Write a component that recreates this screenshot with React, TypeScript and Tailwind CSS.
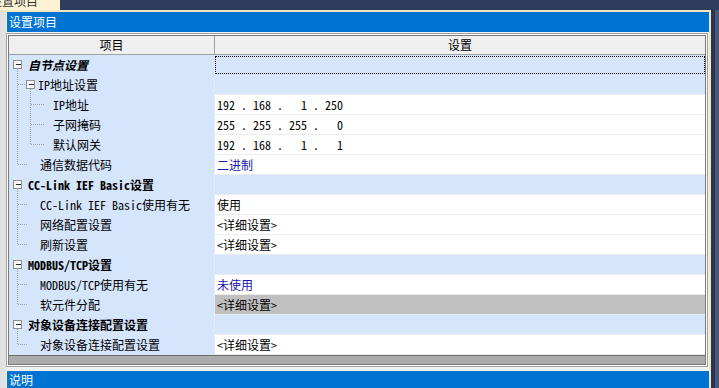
import type { ReactNode } from "react";

type Kind = "root" | "group" | "leaf" | "leafLast" | "sub" | "subLast";

type Row = {
  label: string;
  kind: Kind;
  value?: ReactNode;
  cell?: "blue" | "white" | "gray" | "focus";
  blueText?: boolean;
};

const guideWidth: Record<Kind, number> = {
  root: 19,
  group: 29,
  leaf: 31,
  leafLast: 31,
  sub: 44,
  subLast: 44,
};

function Box({ cx }: { cx: number }) {
  return (
    <g shapeRendering="crispEdges">
      <rect x={cx - 4} y={5.5} width={8} height={8} fill="#f7f7f7" stroke="#8e8f8f" />
      <line x1={cx - 2} y1={9.5} x2={cx + 3} y2={9.5} stroke="#2a2a2a" />
    </g>
  );
}

function Guides({ kind }: { kind: Kind }) {
  const dot = { stroke: "#a0a0a0", strokeDasharray: "1 1", shapeRendering: "crispEdges" as const };
  return (
    <svg width={guideWidth[kind]} height={20} className="shrink-0">
      {kind === "root" && (
        <>
          <line x1={8.5} y1={14} x2={8.5} y2={20} {...dot} />
          <Box cx={8.5} />
        </>
      )}
      {kind === "group" && (
        <>
          <line x1={8.5} y1={0} x2={8.5} y2={20} {...dot} />
          <line x1={9} y1={9.5} x2={17} y2={9.5} {...dot} />
          <line x1={21.5} y1={14} x2={21.5} y2={20} {...dot} />
          <Box cx={21.5} />
        </>
      )}
      {(kind === "leaf" || kind === "leafLast") && (
        <>
          <line x1={8.5} y1={0} x2={8.5} y2={kind === "leaf" ? 20 : 10} {...dot} />
          <line x1={9} y1={9.5} x2={19} y2={9.5} {...dot} />
        </>
      )}
      {(kind === "sub" || kind === "subLast") && (
        <>
          <line x1={8.5} y1={0} x2={8.5} y2={20} {...dot} />
          <line x1={21.5} y1={0} x2={21.5} y2={kind === "sub" ? 20 : 10} {...dot} />
          <line x1={22} y1={9.5} x2={35} y2={9.5} {...dot} />
        </>
      )}
    </svg>
  );
}

function Ip({ parts }: { parts: string[] }) {
  return (
    <span className="flex">
      {parts.map((p, i) => (
        <span key={i} className="flex">
          <span className="w-[18px] text-right">{p}</span>
          {i < 3 && <span className="w-[18px] text-center">.</span>}
        </span>
      ))}
    </span>
  );
}

const rows: Row[] = [
  { label: "自节点设置", kind: "root", cell: "focus" },
  { label: "IP地址设置", kind: "group", cell: "blue" },
  { label: "IP地址", kind: "sub", value: <Ip parts={["192", "168", "1", "250"]} /> },
  { label: "子网掩码", kind: "sub", value: <Ip parts={["255", "255", "255", "0"]} /> },
  { label: "默认网关", kind: "subLast", value: <Ip parts={["192", "168", "1", "1"]} /> },
  { label: "通信数据代码", kind: "leafLast", value: "二进制", blueText: true },
  { label: "CC-Link IEF Basic设置", kind: "root", cell: "blue" },
  { label: "CC-Link IEF Basic使用有无", kind: "leaf", value: "使用" },
  { label: "网络配置设置", kind: "leaf", value: "<详细设置>" },
  { label: "刷新设置", kind: "leafLast", value: "<详细设置>" },
  { label: "MODBUS/TCP设置", kind: "root", cell: "blue" },
  { label: "MODBUS/TCP使用有无", kind: "leaf", value: "未使用", blueText: true },
  { label: "软元件分配", kind: "leafLast", value: "<详细设置>", cell: "gray" },
  { label: "对象设备连接配置设置", kind: "root", cell: "blue" },
  { label: "对象设备连接配置设置", kind: "leafLast", value: "<详细设置>" },
];

function ValueCell({ row }: { row: Row }) {
  const cell = row.cell ?? "white";
  if (cell === "focus") {
    return (
      <div className="flex-1 bg-[#d5e5fc] py-px">
        <div className="h-full border border-dotted border-black" />
      </div>
    );
  }
  const bg =
    cell === "blue" ? "bg-[#d5e5fc]" : cell === "gray" ? "bg-[#c0c0c0]" : "bg-white";
  return (
    <div
      className={`flex flex-1 items-center border-b border-[#ececec] pl-[2px] ${bg} ${
        row.blueText ? "text-[#1515b0]" : "text-black"
      }`}
    >
      {row.value}
    </div>
  );
}

export default function App() {
  return (
    <div className="flex h-[388px] w-[719px] flex-col overflow-hidden bg-[#2b3a58] font-['Noto_Sans_Mono_CJK_SC','Noto_Sans_CJK_SC',monospace] text-[12px] leading-[14px]">
      <div className="flex h-[10px] shrink-0">
        <div className="w-[60px] overflow-hidden bg-[#fbf2d3] text-[#333]">
          <div className="-ml-[10px] -mt-[6px] whitespace-nowrap">设置项目</div>
        </div>
        <div className="flex-1 bg-[#2d3c5b]" />
      </div>

      <div className="flex min-h-0 flex-1">
        <div className="flex w-[711px] flex-col border-r-2 border-t-2 border-[#f3e7c2] bg-[#f0f0f0]">
          <div className="flex flex-1">
            <div className="w-[6px] shrink-0 bg-[#e2e2e2]" />
            <div className="flex flex-1 flex-col">
              <div className="ml-px flex h-[20px] shrink-0 items-center bg-[#0174d3] pl-[2px] text-white">
                设置项目
              </div>

              <div className="mr-px mt-px border border-[#a0a0a0] bg-white p-px">
                <div className="border border-[#7a7a7a]">
                  <div className="flex h-[19px] border-b border-[#a0a0a0] bg-[#efefef] text-black">
                    <div className="flex w-[206px] items-center justify-center border-r border-[#a0a0a0]">
                      项目
                    </div>
                    <div className="flex flex-1 items-center justify-center">设置</div>
                  </div>

                  {rows.map((row, i) => {
                    const isRoot = row.kind === "root";
                    return (
                      <div key={i} className="flex h-[20px]">
                        <div className="flex w-[206px] items-center border-r border-[#e4ecf7] bg-[#d5e5fc] text-black">
                          <Guides kind={row.kind} />
                          <span
                            className={`whitespace-nowrap ${isRoot ? "font-bold" : ""} ${
                              i === 0 ? "italic" : ""
                            }`}
                          >
                            {row.label}
                          </span>
                        </div>
                        <ValueCell row={row} />
                      </div>
                    );
                  })}

                  <div className="h-[9px] border-t border-[#6e6e6e] bg-[#ababab]" />
                </div>
              </div>

              <div className="h-[4px]" />
              <div className="ml-px flex h-[20px] shrink-0 items-start bg-[#0174d3] pl-[2px] pt-[2px] text-white">
                说明
              </div>
            </div>
          </div>
        </div>
        <div className="w-[4px] bg-[#283652]" />
        <div className="flex-1 bg-[#4a5877]" />
      </div>
    </div>
  );
}
